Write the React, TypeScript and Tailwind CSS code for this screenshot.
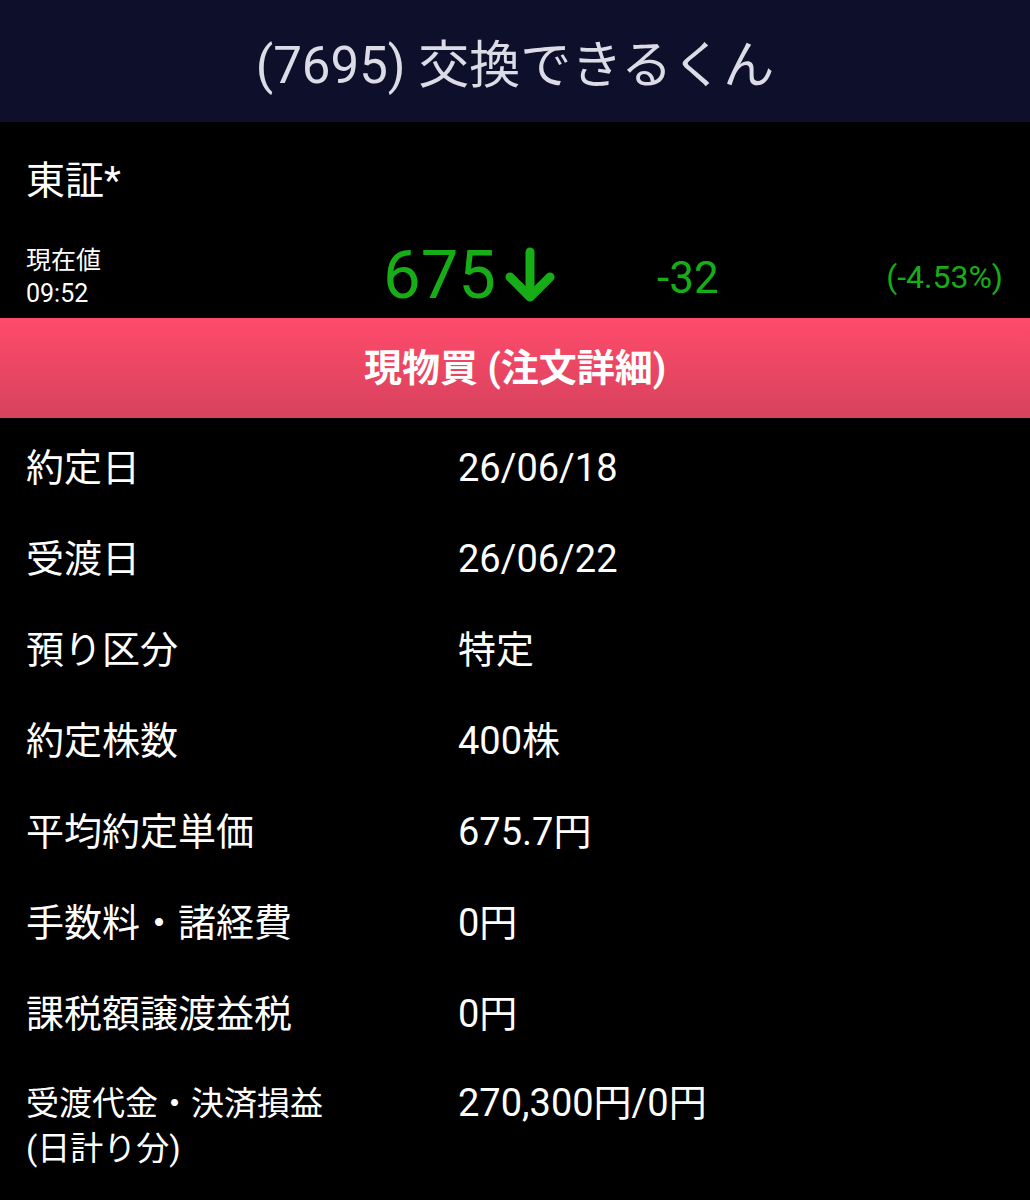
import React from 'react';

const font = { fontFamily: 'Roboto, "Noto Sans CJK JP", sans-serif' };

const rows: { label: string; value: string }[] = [
  { label: '約定日', value: '26/06/18' },
  { label: '受渡日', value: '26/06/22' },
  { label: '預り区分', value: '特定' },
  { label: '約定株数', value: '400株' },
  { label: '平均約定単価', value: '675.7円' },
  { label: '手数料・諸経費', value: '0円' },
  { label: '課税額譲渡益税', value: '0円' },
];

const DownArrow = () => (
  <svg width="52" height="56" viewBox="0 0 52 56" className="self-end mb-[15px] ml-[8px]">
    <g fill="none" stroke="#16ad16" strokeWidth="9" strokeLinecap="round" strokeLinejoin="round">
      <line x1="26" y1="5" x2="26" y2="49" />
      <polyline points="6,30 26,50 46,30" />
    </g>
  </svg>
);

const App: React.FC = () => {
  return (
    <div className="w-[1030px] min-h-[1200px] bg-black text-white" style={font}>
      <header className="h-[122px] bg-[#0e0f2b] flex items-center justify-center">
        <h1 className="text-[51px] leading-none text-[#dcdce6] pt-[8px]">(7695) 交換できるくん</h1>
      </header>

      <div className="h-[118px] flex items-center px-[26px]">
        <span className="text-[39px] leading-none">東証*</span>
      </div>

      <div className="h-[78px] flex pl-[26px] pr-[27px]">
        <div className="w-[357px] pt-[4px] text-[25px] leading-[33px]">
          <div>現在値</div>
          <div>09:52</div>
        </div>
        <div className="w-[274px] flex">
          <span className="self-end pb-[9px] text-[67px] leading-none text-[#16ad16]">675</span>
          <DownArrow />
        </div>
        <div className="flex-1 flex">
          <span className="self-end pb-[18px] text-[44px] leading-none text-[#16ad16]">-32</span>
        </div>
        <div className="flex">
          <span className="self-end pb-[25px] text-[32px] leading-none text-[#16ad16]">(-4.53%)</span>
        </div>
      </div>

      <div className="h-[100px] bg-gradient-to-b from-[#ff4b6b] to-[#d7425d] flex items-center justify-center">
        <span className="text-[38px] font-bold leading-none">現物買 (注文詳細)</span>
      </div>

      <div className="pt-[4px]">
        {rows.map(row => (
          <div key={row.label} className="h-[91px] flex items-center px-[26px] text-[38px] leading-none">
            <div className="w-[432px]">{row.label}</div>
            <div>{row.value}</div>
          </div>
        ))}
        <div className="flex px-[26px] pt-[22px] pb-[30px] leading-[45px]">
          <div className="w-[432px] text-[33px]">
            <div>受渡代金・決済損益</div>
            <div>(日計り分)</div>
          </div>
          <div className="text-[38px]">270,300円/0円</div>
        </div>
      </div>
    </div>
  );
};

export default App;
